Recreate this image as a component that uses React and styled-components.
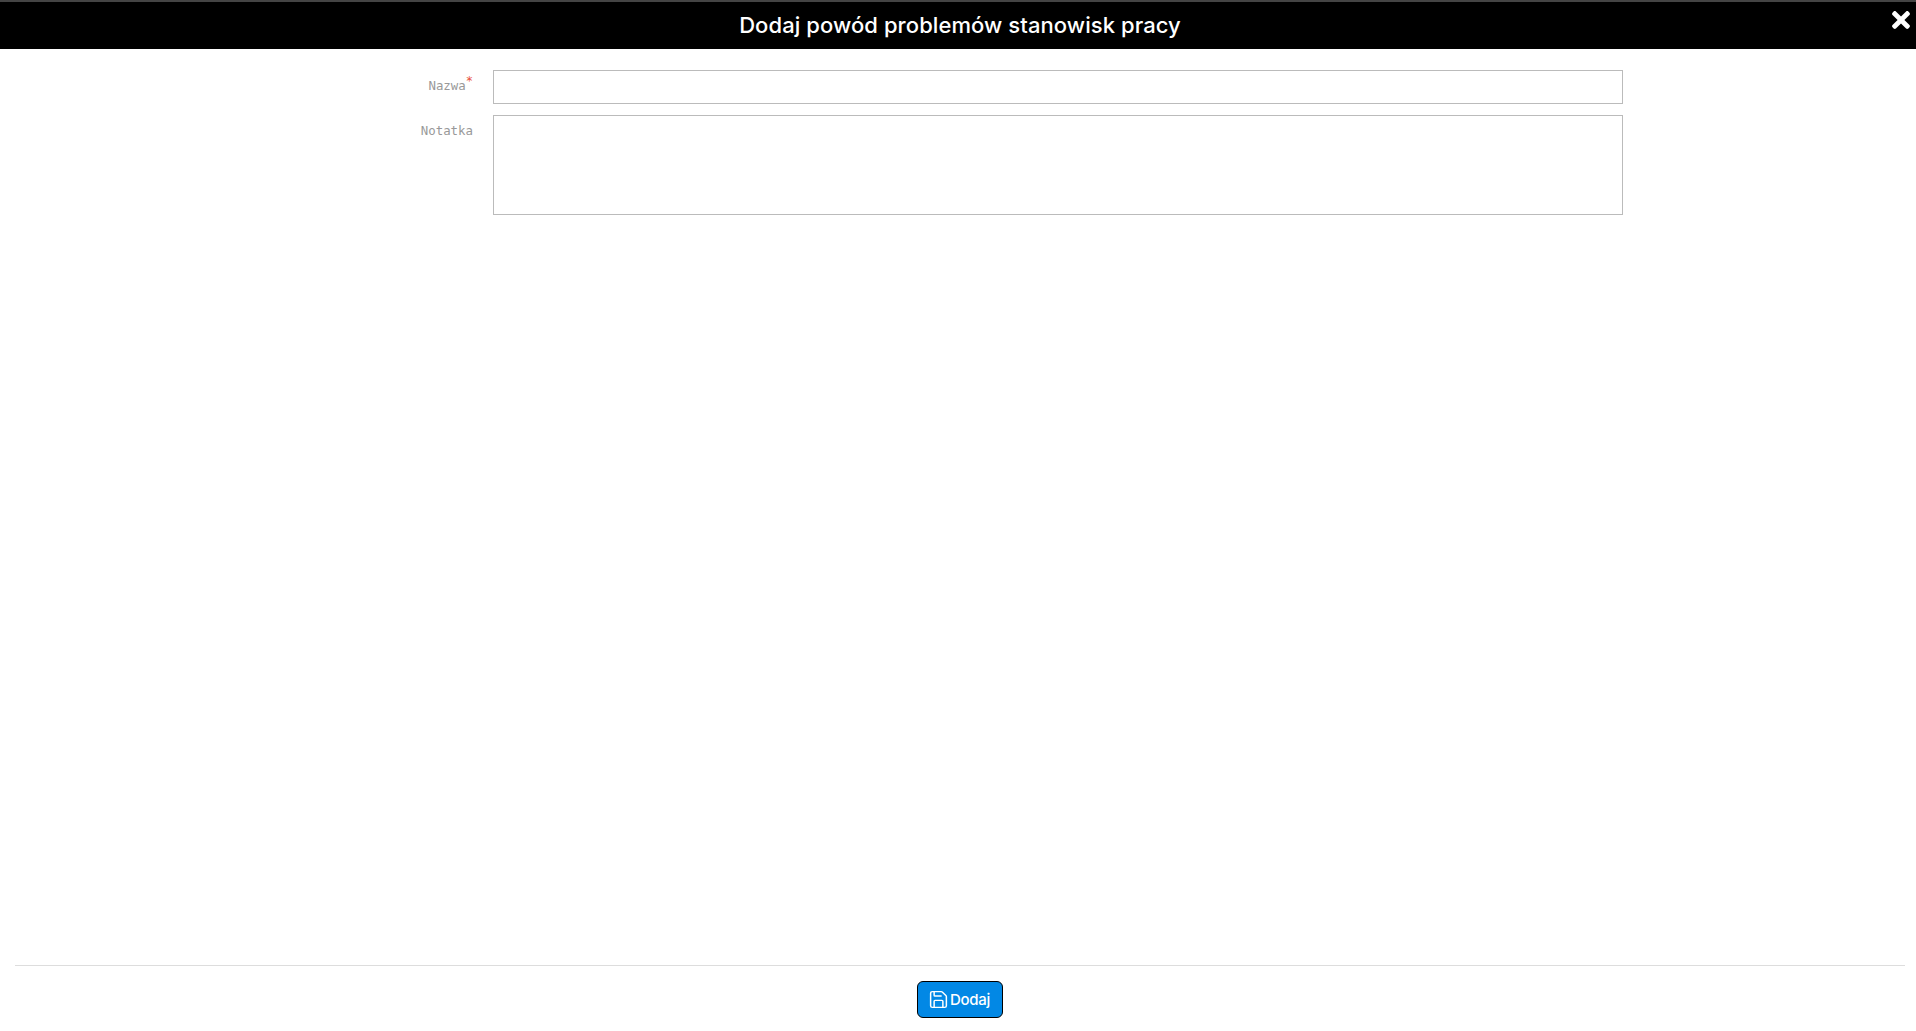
import styled, { createGlobalStyle } from "styled-components";
import { FaTimes } from "react-icons/fa";
import { Save } from "lucide-react";

const GlobalStyle = createGlobalStyle`
  html, body {
    margin: 0;
    padding: 0;
    height: 100%;
    background: #fff;
    font-family: "Inter", "Liberation Sans", sans-serif;
  }
  #root {
    height: 100%;
  }
`

function App() {
  return (
    <Page>
      <GlobalStyle />
      <Header>
        <h1>Dodaj powód problemów stanowisk pracy</h1>
        <CloseButton aria-label="Zamknij"><FaTimes /></CloseButton>
      </Header>
      <Form>
        <Row>
          <Label>Nazwa<sup>*</sup></Label>
          <Input type="text" />
        </Row>
        <Row>
          <Label>Notatka</Label>
          <Textarea />
        </Row>
      </Form>
      <Footer>
        <SaveButton><Save size={21} strokeWidth={1.7} /> Dodaj</SaveButton>
      </Footer>
    </Page>
  )
}

const Page = styled.div`
  height: 1031px;
  display: flex;
  flex-direction: column;
  overflow: hidden;
`
const Header = styled.header`
  position: relative;
  height: 47px;
  flex-shrink: 0;
  background: #000;
  border-top: 2px solid #444;
  display: flex;
  align-items: center;
  justify-content: center;
  padding-left: 4px;
  h1 {
    margin: 0;
    color: #fff;
    font-size: 22px;
    font-weight: 500;
    letter-spacing: 0.08px;
    line-height: 47px;
  }
`
const CloseButton = styled.button`
  position: absolute;
  top: 5px;
  right: 2px;
  padding: 0;
  border: 0;
  background: none;
  color: #fff;
  font-size: 26px;
  line-height: 1;
  display: flex;
`
const Form = styled.main`
  flex: 1;
  padding-top: 21px;
  display: flex;
  flex-direction: column;
  gap: 11px;
`
const Row = styled.div`
  display: flex;
  margin-left: 400px;
  width: 1223px;
`
const Label = styled.label`
  width: 73px;
  margin-right: 20px;
  padding-top: 8px;
  text-align: right;
  color: #999;
  font-family: "DejaVu Sans Mono", monospace;
  font-size: 12.4px;
  font-weight: 500;
  white-space: nowrap;
  sup {
    color: #e8503a;
    font-size: 12px;
    line-height: 0;
  }
`
const Input = styled.input`
  flex: 1;
  height: 34px;
  box-sizing: border-box;
  border: 1px solid #bbb;
  outline: none;
  padding: 0 8px;
`
const Textarea = styled.textarea`
  flex: 1;
  height: 100px;
  box-sizing: border-box;
  border: 1px solid #bbb;
  outline: none;
  padding: 8px;
  resize: none;
`
const Footer = styled.footer`
  height: 66px;
  margin: 0 11px 0 15px;
  border-top: 1px solid #ddd;
  display: flex;
  justify-content: center;
  padding-top: 15px;
  box-sizing: border-box;
`
const SaveButton = styled.button`
  width: 86px;
  height: 37px;
  box-sizing: border-box;
  background: #0288e5;
  border: 1px solid #000;
  border-radius: 6px;
  color: #fff;
  font-family: "Inter", "Liberation Sans", sans-serif;
  font-size: 15px;
  font-weight: 500;
  letter-spacing: -0.3px;
  display: flex;
  align-items: center;
  justify-content: center;
  gap: 1px;
  padding: 0 2px 0 0;
`
export default App
